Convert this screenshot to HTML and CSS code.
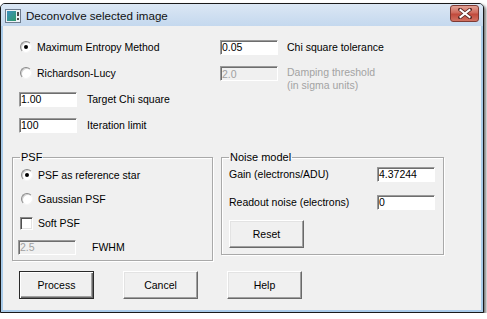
FILE: index.html
```html
<!DOCTYPE html>
<html lang="en">
<head>
  <meta charset="UTF-8">
  <title>Deconvolve selected image</title>
  <link rel="stylesheet" href="styles.css">
</head>
<body>

  <div class="window">
    <div class="titlebar">
      <svg class="app-icon" width="16" height="14" viewBox="0 0 16 14">
        <defs>
          <linearGradient id="pic" x1="0" y1="0" x2="1" y2="1">
            <stop offset="0" stop-color="#3f8fc0"/>
            <stop offset="1" stop-color="#2f9a6a"/>
          </linearGradient>
        </defs>
        <rect x="0.5" y="0.5" width="15" height="13" fill="#eef2f7" stroke="#6d7b8d"/>
        <rect x="2" y="2" width="9" height="10" fill="url(#pic)"/>
        <rect x="12" y="3" width="2" height="4" fill="#4a4a4a"/>
        <rect x="12" y="9" width="2" height="2" fill="#4a4a4a"/>
      </svg>
      <span class="title">Deconvolve selected image</span>
      <button class="close-btn">
        <svg width="14" height="11" viewBox="0 0 14 11">
          <path d="M2 1.5 L12 9.5 M12 1.5 L2 9.5" stroke="#5a2a26" stroke-width="3.6" stroke-linecap="square"/>
          <path d="M2.5 2 L11.5 9 M11.5 2 L2.5 9" stroke="#fff" stroke-width="2" stroke-linecap="square"/>
        </svg>
      </button>
    </div>

    <div class="client">
      <!-- method and limits -->
      <div class="top">
        <div class="col-left">
          <label class="row"><span class="radio checked"></span>Maximum Entropy Method</label>
          <label class="row"><span class="radio"></span>Richardson-Lucy</label>
          <div class="row"><input class="edit" value="1.00"><span class="lbl">Target Chi square</span></div>
          <div class="row"><input class="edit" value="100"><span class="lbl">Iteration limit</span></div>
        </div>
        <div class="col-right">
          <div class="row"><input class="edit" value="0.05"><span class="lbl">Chi square tolerance</span></div>
          <div class="row row-top">
            <input class="edit" value="2.0" disabled>
            <span class="lbl lbl-off">Damping threshold<br>(in sigma units)</span>
          </div>
        </div>
      </div>

      <div class="groups">
        <fieldset class="group psf">
          <legend>PSF</legend>
          <label class="row"><span class="radio checked"></span>PSF as reference star</label>
          <label class="row"><span class="radio"></span>Gaussian PSF</label>
          <label class="row"><span class="check"></span>Soft PSF</label>
          <div class="row"><input class="edit fwhm" value="2.5" disabled><span class="lbl">FWHM</span></div>
        </fieldset>

        <fieldset class="group noise">
          <legend>Noise model</legend>
          <div class="nrow"><span>Gain (electrons/ADU)</span><input class="edit" value="4.37244"></div>
          <div class="nrow"><span>Readout noise (electrons)</span><input class="edit" value="0"></div>
          <button class="btn reset">Reset</button>
        </fieldset>
      </div>

      <div class="actions">
        <button class="btn default">Process</button>
        <button class="btn">Cancel</button>
        <button class="btn">Help</button>
      </div>
    </div>
  </div>

</body>
</html>
```

FILE: styles.css
```css
body {
  margin: 0;
  padding: 3px 0 0 0;
  background-color: #fff;
  font-family: 'Liberation Sans', Arial, sans-serif;
  font-size: 10.5px;
  color: #000;
}

.window {
  width: 484px;
  height: 310px;
  box-sizing: border-box;
  border: 1px solid #1a1a1a;
  border-radius: 5px 5px 0 0;
  background-color: #a9cbe9;
  box-shadow: 2px 2px 3px rgba(0, 0, 0, 0.55);
  display: flex;
  flex-direction: column;
}

.titlebar {
  height: 22px;
  display: flex;
  align-items: center;
  padding: 0 4px 0 4px;
  background: linear-gradient(#dbe7f4, #c4d8ee);
  border-radius: 4px 4px 0 0;
}

.app-icon {
  margin-top: 1px;
}

.title {
  margin-left: 5px;
  font-family: 'Liberation Sans', Arial, sans-serif;
  font-size: 11.6px;
  color: #111;
  flex: 1;
}

.close-btn {
  align-self: flex-start;
  margin-top: 1px;
  width: 29px;
  height: 17px;
  padding: 0;
  border: 1px solid #7e3a33;
  border-radius: 3px;
  background: linear-gradient(#e3a396, #cf6a5c 45%, #c14a3c 55%, #d27262);
  display: flex;
  align-items: center;
  justify-content: center;
}

.client {
  flex: 1;
  margin: 0 2px 2px 2px;
  background-color: #f0f0f0;
}

/* upper part */
.top {
  display: flex;
  padding: 8px 0 0 16px;
}

.col-left {
  width: 201px;
}

.row {
  height: 26px;
  display: flex;
  align-items: center;
}

.row-top {
  align-items: flex-start;
  padding-top: 6px;
  box-sizing: border-box;
}

.lbl {
  margin-left: 10px;
  line-height: 13px;
}

.col-right .lbl {
  margin-left: 9px;
}

.lbl-off {
  color: #a3a3a3;
}

.radio {
  width: 12px;
  height: 12px;
  box-sizing: border-box;
  margin: 0 5px 0 1px;
  border-radius: 50%;
  border: 1px solid;
  border-color: #8a8a8a #f4f4f4 #f4f4f4 #8a8a8a;
  background-color: #fff;
  box-shadow: inset 1px 1px 0 #d0d0d0;
  display: flex;
  align-items: center;
  justify-content: center;
}

.radio.checked::after {
  content: "";
  width: 4px;
  height: 4px;
  border-radius: 50%;
  background-color: #000;
}

.check {
  width: 13px;
  height: 13px;
  box-sizing: border-box;
  margin: 0 5px 0 0;
  border: 1px solid;
  border-color: #8a8a8a #fff #fff #8a8a8a;
  background-color: #fff;
  box-shadow: inset 1px 1px 0 #505050, inset -1px -1px 0 #e3e3e3;
}

.edit {
  width: 58px;
  height: 15px;
  box-sizing: border-box;
  margin: 0;
  padding: 0 1px;
  font-family: 'Liberation Sans', Arial, sans-serif;
  font-size: 10.5px;
  color: #000;
  background-color: #fff;
  border: 1px solid;
  border-color: #9a9a9a #fff #fff #9a9a9a;
  box-shadow: inset 1px 1px 0 #6e6e6e;
  outline: none;
}

.edit:disabled {
  background-color: #f0f0f0;
  color: #a0a0a0;
}

/* group boxes */
.groups {
  display: flex;
  align-items: flex-start;
  gap: 8px;
  margin-top: 13px;
  padding-left: 9px;
}

.group {
  margin: 0;
  padding: 0 7px;
  min-width: 0;
  box-sizing: border-box;
  border: 1px solid #a9a9a9;
  box-shadow: inset 1px 1px 0 #fff, 1px 1px 0 #fff;
}

.group legend {
  padding: 0 1px;
  margin-left: 0;
  line-height: 12px;
  font-size: 11px;
}

.psf {
  width: 201px;
  padding-bottom: 1px;
}

.psf .row {
  height: 24px;
}

.psf .lbl {
  margin-left: 16px;
}

.fwhm {
  margin-left: -2px;
}

.noise {
  width: 223px;
  padding: 0 8px 6px 7px;
}

.nrow {
  height: 22px;
  display: flex;
  align-items: center;
  justify-content: space-between;
}

.nrow + .nrow {
  margin-top: 6px;
}

/* buttons */
.btn {
  width: 75px;
  height: 28px;
  padding: 0;
  font-family: 'Liberation Sans', Arial, sans-serif;
  font-size: 10.5px;
  color: #000;
  background-color: #f0f0f0;
  border: 1px solid;
  border-color: #fff #696969 #696969 #fff;
  box-shadow: inset -1px -1px 0 #a0a0a0, inset 1px 1px 0 #e3e3e3;
}

.btn.default {
  border: 1px solid #2a2a2a;
  box-shadow: inset 1px 1px 0 #fff, inset -1px -1px 0 #696969, inset -2px -2px 0 #a0a0a0;
}

.reset {
  margin-top: 7px;
}

.actions {
  display: flex;
  gap: 29px;
  margin-top: 10px;
  padding-left: 16px;
}
```
